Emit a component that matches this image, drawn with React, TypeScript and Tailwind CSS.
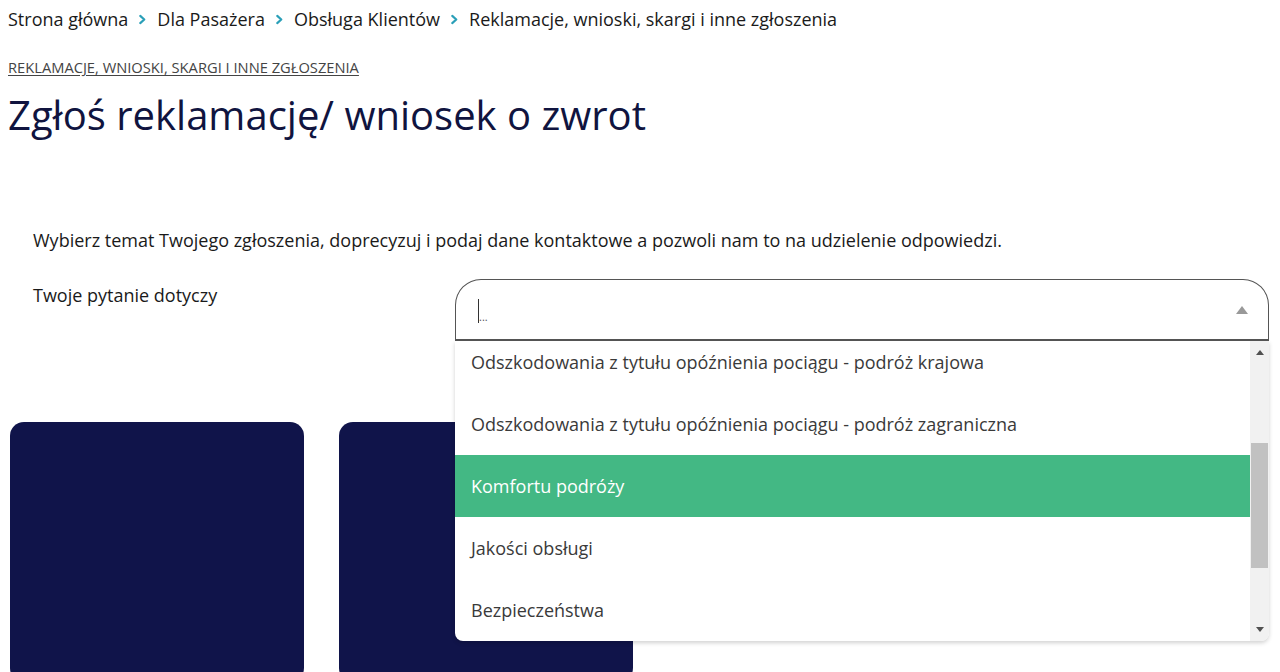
import * as React from 'react';

const crumbs = ['Strona główna', 'Dla Pasażera', 'Obsługa Klientów', 'Reklamacje, wnioski, skargi i inne zgłoszenia'];

const options = [
  'Odszkodowania z tytułu opóźnienia pociągu - podróż krajowa',
  'Odszkodowania z tytułu opóźnienia pociągu - podróż zagraniczna',
  'Komfortu podróży',
  'Jakości obsługi',
  'Bezpieczeństwa',
];

function Chevron() {
  return (
    <svg viewBox="0 0 10 12" className="mx-[10px] h-[11px] w-[9px]">
      <path d="M2.5 2 L7 6 L2.5 10" fill="none" stroke="#2a9fb8" strokeWidth="2.4" strokeLinecap="round" strokeLinejoin="round" />
    </svg>
  );
}

function TopicSelect() {
  return (
    <div className="relative flex-1">
      <div className="flex h-[62px] items-center rounded-t-[26px] border border-b-2 border-[#555] bg-white pl-[22px] pr-[20px]">
        <span className="mt-[2px] h-[24px] w-px bg-[#333]" />
        <span className="mt-[14px] text-[11px] leading-none text-[#555]">...</span>
        <svg viewBox="0 0 12 8" className="ml-auto h-[8px] w-[12px]">
          <path d="M6 0 L12 8 L0 8 Z" fill="#999" />
        </svg>
      </div>
      <div className="absolute left-0 right-0 top-[62px] z-10 flex h-[300px] overflow-hidden rounded-b-[8px] bg-white shadow-[0_2px_4px_rgba(0,0,0,0.18)]">
        <ul className="-mt-[10px] flex-1">
          {options.map((o, i) => (
            <li
              key={o}
              className={
                i === 2
                  ? 'flex h-[62px] items-center bg-[#43b884] pl-[16px] text-[18px] text-white'
                  : 'flex h-[62px] items-center pl-[16px] text-[18px] text-[#3a3a3a]'
              }
            >
              {o}
            </li>
          ))}
        </ul>
        <div className="flex w-[19px] flex-col items-center bg-[#f1f1f1]">
          <svg viewBox="0 0 8 5" className="mt-[9px] h-[5px] w-[8px]">
            <path d="M4 0 L8 5 L0 5 Z" fill="#505050" />
          </svg>
          <div className="mt-[88px] h-[125px] w-[17px] bg-[#c1c1c1]" />
          <svg viewBox="0 0 8 5" className="mt-auto mb-[9px] h-[5px] w-[8px]">
            <path d="M0 0 L8 0 L4 5 Z" fill="#505050" />
          </svg>
        </div>
      </div>
    </div>
  );
}

export default function App() {
  return (
    <div className="min-h-[672px] overflow-hidden bg-white px-[8px] font-['Open_Sans',_'Liberation_Sans',_sans-serif]">
      <nav className="flex h-[40px] items-center pb-[1px] text-[18px] text-[#1a1a1a]">
        {crumbs.map((c, i) => (
          <React.Fragment key={c}>
            {i > 0 && <Chevron />}
            <span>{c}</span>
          </React.Fragment>
        ))}
      </nav>
      <a className="mt-[17px] block text-[14.7px] uppercase leading-[20px] text-[#444] underline underline-offset-2">
        Reklamacje, wnioski, skargi i inne zgłoszenia
      </a>
      <h1 className="mt-[10px] text-[40px] leading-[56px] text-[#10143f]">Zgłoś reklamację/ wniosek o zwrot</h1>

      <section className="pl-[25px] pt-[84px] pr-[3px]">
        <p className="text-[18px] leading-[26px] text-[#1a1a1a]">
          Wybierz temat Twojego zgłoszenia, doprecyzuj i podaj dane kontaktowe a pozwoli nam to na udzielenie odpowiedzi.
        </p>
        <div className="mt-[26px] flex">
          <label className="mt-[3px] w-[422px] text-[18px] leading-[26px] text-[#1a1a1a]">Twoje pytanie dotyczy</label>
          <TopicSelect />
        </div>
      </section>

      <div className="mt-[81px] flex gap-[35px] pl-[2px]">
        <div className="h-[260px] w-[294px] rounded-[14px] bg-[#10144a]" />
        <div className="h-[260px] w-[294px] rounded-[14px] bg-[#10144a]" />
      </div>
    </div>
  );
}
